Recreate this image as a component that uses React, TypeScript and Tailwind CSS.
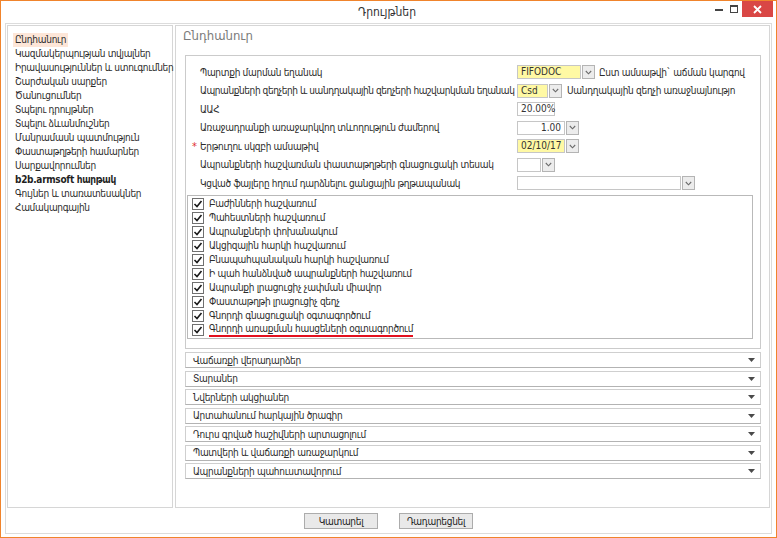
import React from "react";

const navItems = [
  "Ընդհանուր",
  "Կազմակերպության տվյալներ",
  "Իրավասություններ և ստուգումներ",
  "Շարժական սարքեր",
  "Ծանուցումներ",
  "Տպելու դրույթներ",
  "Տպելու ձևանմուշներ",
  "Մանրամասն պատմություն",
  "Փաստաթղթերի համարներ",
  "Սարքավորումներ",
  "b2b.armsoft հարթակ",
  "Գույներ և տառատեսակներ",
  "Համակարգային",
];

const checks = [
  "Բաժինների հաշվառում",
  "Պահեստների հաշվառում",
  "Ապրանքների փոխանակում",
  "Ակցիզային հարկի հաշվառում",
  "Բնապահպանական հարկի հաշվառում",
  "Ի պահ հանձնված ապրանքների հաշվառում",
  "Ապրանքի լրացուցիչ չափման միավոր",
  "Փաստաթղթի լրացուցիչ զեղչ",
  "Գնորդի գնացուցակի օգտագործում",
  "Գնորդի առաքման հասցեների օգտագործում",
];

const sections = [
  "Վաճառքի վերադարձեր",
  "Տարաներ",
  "Նվերների ակցիաներ",
  "Արտահանում հարկային ծրագիր",
  "Դուրս գրված հաշիվների արտացոլում",
  "Պատվերի և վաճառքի առաջարկում",
  "Ապրանքների պահուստավորում",
];

function DropBtn() {
  return (
    <div className="ml-[1px] w-[13px] h-[14px] border border-[#b4b4b4] bg-[#ececec] flex items-center justify-center">
      <svg width="7" height="5" viewBox="0 0 7 5">
        <path d="M0.8 1 L3.5 3.8 L6.2 1" fill="none" stroke="#6b6b6b" strokeWidth="1.1" />
      </svg>
    </div>
  );
}

function Field({
  w,
  value,
  yellow,
  right,
  drop,
}: {
  w: string;
  value?: string;
  yellow?: boolean;
  right?: boolean;
  drop?: boolean;
}) {
  return (
    <div className="flex items-center">
      <div
        className={`${w} h-[14px] border border-[#c6c6c6] px-[3px] flex items-center text-[10px] leading-none text-[#333] tracking-normal ${
          yellow ? "bg-[#fff9a4]" : "bg-white"
        } ${right ? "justify-end" : ""}`}
      >
        {value}
      </div>
      {drop && <DropBtn />}
    </div>
  );
}

function Row({
  label,
  req,
  tight,
  children,
}: {
  label: string;
  req?: boolean;
  tight?: boolean;
  children: React.ReactNode;
}) {
  return (
    <div className="h-[18.5px] flex items-center pl-[6px]">
      <span className="w-[8px] text-[#e03030] text-[11px] leading-none">{req ? "*" : ""}</span>
      <span className={`w-[317px] whitespace-nowrap text-[#2c2c2c] ${tight ? "tracking-[-0.42px]" : ""}`}>
        {label}
      </span>
      {children}
    </div>
  );
}

function CheckBox() {
  return (
    <div className="w-[12px] h-[12px] border border-[#707070] bg-white flex items-center justify-center">
      <svg width="10" height="10" viewBox="0 0 10 10">
        <path d="M1.5 5 L4 7.5 L8.5 2" fill="none" stroke="#1a1a1a" strokeWidth="1.6" />
      </svg>
    </div>
  );
}

export default function App() {
  return (
    <div
      className="w-[777px] h-[538px] bg-white border border-[#f0842c] flex flex-col overflow-hidden text-[10px] tracking-[-0.3px] text-[#2c2c2c]"
      style={{ fontFamily: '"DejaVu Sans Condensed", "DejaVu Sans", Tahoma, sans-serif', fontStretch: "condensed" }}
    >
      {/* Title bar */}
      <div className="h-[22px] flex items-start bg-white">
        <div className="flex-1" />
        <div className="h-[22px] flex items-center text-[12px] tracking-normal text-[#333]">Դրույթներ</div>
        <div className="flex-1 flex justify-end items-start pr-[3px]">
          <div className="w-[8px] h-[2px] bg-[#444] mt-[8px] mr-[7px]" />
          <div className="w-[8px] h-[8px] border border-[#444] border-t-2 mt-[4px] mr-[4px]" />
          <div className="w-[31px] h-[16px] bg-[#d94745] flex items-center justify-center">
            <svg width="9" height="9" viewBox="0 0 9 9">
              <path d="M1 1 L8 8 M8 1 L1 8" stroke="#fff" strokeWidth="1.8" />
            </svg>
          </div>
        </div>
      </div>

      {/* Body */}
      <div className="flex-1 px-[4px] pb-[3px]">
        <div className="h-full border border-[#dcdcdc] flex flex-col">
          <div className="flex gap-[2px] px-[1px] pt-[1px] h-[485px]">
            {/* Left nav */}
            <div className="w-[166px] h-[483px] border border-[#d6d6d6] pt-[7px] pl-[5px]">
              {navItems.map((n, i) => (
                <div key={n} className="h-[14px] flex items-center">
                  <span
                    className={`px-[2px] leading-[14px] whitespace-nowrap ${
                      i === 0 ? "bg-[#fde6d8]" : ""
                    } ${i === 10 ? "font-bold text-[#1f1f1f]" : ""}`}
                  >
                    {n}
                  </span>
                </div>
              ))}
            </div>

            {/* Right content */}
            <div className="w-[595px] h-[483px] border border-[#d6d6d6] flex flex-col">
              <div className="h-[20px] pl-[7px] flex items-center text-[13px] tracking-normal text-[#7b7b7b]">Ընդհանուր</div>
              <div className="mt-[9px] ml-[9px] mr-[8px] h-[294px] border border-[#cbcbcb] pt-[7px] flex flex-col">
                <Row label="Պարտքի մարման եղանակ">
                  <Field w="w-[64px]" value="FIFODOC" yellow drop />
                  <span className="ml-[4px] whitespace-nowrap">Ըստ ամսաթվի` աճման կարգով</span>
                </Row>
                <Row label="Ապրանքների զեղչերի և սանդղակային զեղչերի հաշվարկման եղանակ" tight>
                  <Field w="w-[31px]" value="Csd" yellow drop />
                  <span className="ml-[5px] whitespace-nowrap">Սանդղակային զեղչի առաջնայնությո</span>
                </Row>
                <Row label="ԱԱՀ">
                  <Field w="w-[38px]" value="20.00%" />
                </Row>
                <Row label="Առաջադրանքի առաջարկվող տևողություն ժամերով">
                  <Field w="w-[48px]" value="1.00" right drop />
                </Row>
                <Row label="Երթուղու սկզբի ամսաթիվ" req>
                  <Field w="w-[48px]" value="02/10/17" yellow drop />
                </Row>
                <Row label="Ապրանքների հաշվառման փաստաթղթերի գնացուցակի տեսակ">
                  <Field w="w-[24px]" drop />
                </Row>
                <Row label="Կցված ֆայլերը հղում դարձնելու ցանցային թղթապանակ">
                  <Field w="w-[164px]" drop />
                </Row>

                <div className="mt-[2px] ml-[1px] mr-[7px] h-[144px] border border-[#b9b9b9] pt-[1px] pl-[4px]">
                  {checks.map((c, i) => (
                    <div key={c} className="h-[14px] flex items-center gap-[5px]">
                      <CheckBox />
                      <span
                        className={`whitespace-nowrap leading-[13px] ${
                          i === 9 ? "border-b-2 border-[#e3101e]" : ""
                        }`}
                      >
                        {c}
                      </span>
                    </div>
                  ))}
                </div>
              </div>

              <div className="mt-[3px] ml-[9px] mr-[8px] flex flex-col gap-[2.5px]">
                {sections.map((s) => (
                  <div
                    key={s}
                    className="h-[16px] border border-[#cfcfcf] border-b-[#b3b3b3] pl-[7px] pr-[5px] flex items-center justify-between"
                  >
                    <span className="whitespace-nowrap">{s}</span>
                    <svg width="7" height="4" viewBox="0 0 7 4">
                      <path d="M0 0 L7 0 L3.5 4 Z" fill="#4a4a4a" />
                    </svg>
                  </div>
                ))}
              </div>
            </div>
          </div>

          {/* Buttons */}
          <div className="flex-1 flex items-center justify-center gap-[21px]">
            <button className="w-[74px] h-[16px] border border-[#acacac] bg-[#e9e9e9] flex items-center justify-center text-[10px] text-[#222]">
              Կատարել
            </button>
            <button className="w-[74px] h-[16px] border border-[#acacac] bg-[#e9e9e9] flex items-center justify-center text-[10px] text-[#222]">
              Դադարեցնել
            </button>
          </div>
        </div>
      </div>
    </div>
  );
}
